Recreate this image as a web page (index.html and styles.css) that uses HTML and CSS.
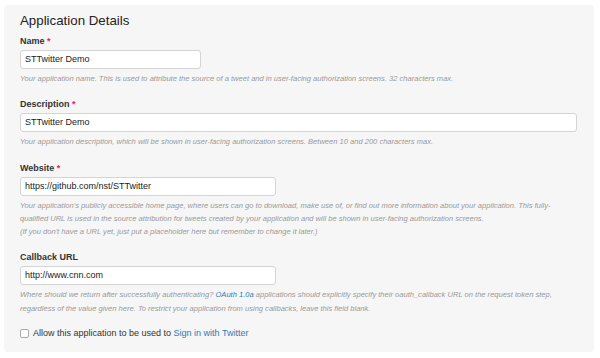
FILE: index.html
```html
<!DOCTYPE html>
<html>
<head>
<meta charset="utf-8">
<link rel="stylesheet" href="styles.css">
</head>
<body>
<div class="panel">
  <h2 class="title">Application Details</h2>

  <div class="field">
    <div class="label">Name <span class="req">*</span></div>
    <div class="input w-short">STTwitter Demo</div>
    <p class="help">Your application name. This is used to attribute the source of a tweet and in user-facing authorization screens. 32 characters max.</p>
  </div>

  <div class="field">
    <div class="label">Description <span class="req">*</span></div>
    <div class="input w-full">STTwitter Demo</div>
    <p class="help">Your application description, which will be shown in user-facing authorization screens. Between 10 and 200 characters max.</p>
  </div>

  <div class="field">
    <div class="label">Website <span class="req">*</span></div>
    <div class="input w-mid">https://github.com/nst/STTwitter</div>
    <p class="help">Your application's publicly accessible home page, where users can go to download, make use of, or find out more information about your application. This fully-qualified URL is used in the source attribution for tweets created by your application and will be shown in user-facing authorization screens.<br>(If you don't have a URL yet, just put a placeholder here but remember to change it later.)</p>
  </div>

  <div class="field">
    <div class="label">Callback URL</div>
    <div class="input w-mid">http://www.cnn.com</div>
    <p class="help">Where should we return after successfully authenticating? <a class="link">OAuth 1.0a</a> applications should explicitly specify their oauth_callback URL on the request token step, regardless of the value given here. To restrict your application from using callbacks, leave this field blank.</p>
  </div>

  <div class="check-row">
    <span class="checkbox"></span>
    <span class="check-text">Allow this application to be used to <a class="link">Sign in with Twitter</a></span>
  </div>
</div>
</body>
</html>
```
FILE: styles.css
```css
* { box-sizing: border-box; }
html, body { margin: 0; padding: 0; background: #fff; }
body {
  font-family: "Liberation Sans", Arial, sans-serif;
  color: #333;
  width: 600px;
  height: 358px;
  overflow: hidden;
}
.panel {
  margin: 5px 6px 0 4px;
  height: 347px;
  background: #f6f6f6;
  border-radius: 4px;
  padding: 7px 16px 0 16px;
}
.title {
  margin: 0 0 5px 0;
  font-size: 13.3px;
  font-weight: normal;
  line-height: 18px;
  color: #222;
}
.field { margin-bottom: 13px; }
.label {
  font-size: 9px;
  font-weight: bold;
  line-height: 12px;
  color: #333;
  margin-bottom: 3px;
}
.req { color: #e0245e; }
.input {
  height: 19px;
  background: #fff;
  border: 1px solid #d4d4d4;
  border-radius: 3px;
  font-size: 9px;
  line-height: 17px;
  padding: 0 4px;
  color: #222;
}
.w-short { width: 181px; }
.w-mid { width: 256px; }
.w-full { width: 557px; }
.help {
  margin: 3px 0 0 0;
  font-size: 7.55px;
  font-style: italic;
  line-height: 13.3px;
  color: #999;
  max-width: 540px;
}
.link { color: #2b7bb9; text-decoration: none; }
.check-row {
  display: flex;
  align-items: center;
  gap: 4px;
  margin-top: 1px;
}
.checkbox {
  width: 9px;
  height: 9px;
  border: 1px solid #aaa;
  border-radius: 2px;
  background: #fff;
}
.check-text { font-size: 9px; color: #333; }
```
